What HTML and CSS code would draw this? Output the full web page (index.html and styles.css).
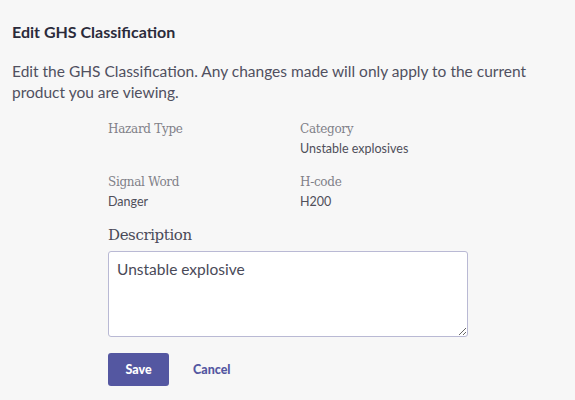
FILE: index.html
```html
<!DOCTYPE html>
<html lang="en">
<head>
    <meta charset="UTF-8">
    <title>Edit GHS Classification</title>
    <link rel="stylesheet" href="styles.css">
</head>
<body>
    <div class="panel">
        <h2 class="title">Edit GHS Classification</h2>
        <p class="intro">Edit the GHS Classification. Any changes made will only apply to the current product you are viewing.</p>

        <div class="form">
            <div class="info-grid">
                <div class="field">
                    <div class="label">Hazard Type</div>
                    <div class="value"></div>
                </div>
                <div class="field">
                    <div class="label">Category</div>
                    <div class="value">Unstable explosives</div>
                </div>
                <div class="field">
                    <div class="label">Signal Word</div>
                    <div class="value">Danger</div>
                </div>
                <div class="field">
                    <div class="label">H-code</div>
                    <div class="value">H200</div>
                </div>
            </div>

            <label class="desc-label" for="description">Description</label>
            <textarea id="description" class="desc">Unstable explosive</textarea>

            <div class="actions">
                <button class="btn-save">Save</button>
                <button class="btn-cancel">Cancel</button>
            </div>
        </div>
    </div>
</body>
</html>
```
FILE: styles.css
```css
body {
    margin: 0;
    background-color: #f7f7f7;
    font-family: Lato, "Open Sans", sans-serif;
    color: #4a4a58;
}
.panel {
    padding: 22px 12px;
}
.title {
    margin: 0 0 20px 0;
    font-size: 16px;
    font-weight: bold;
    color: #2b2b3b;
}
.intro {
    margin: 0 0 16px 0;
    font-size: 15.5px;
    line-height: 21px;
    color: #505060;
}
.form {
    margin-left: 96px;
    width: 360px;
}
.info-grid {
    display: grid;
    grid-template-columns: 192px 1fr;
    row-gap: 14px;
}
.label {
    font-family: "DejaVu Serif", serif;
    font-size: 12px;
    color: #808088;
    line-height: 20px;
    letter-spacing: -0.3px;
}
.value {
    font-size: 12.5px;
    color: #4f4f5a;
    line-height: 19px;
}
.desc-label {
    display: block;
    margin-top: 15px;
    margin-bottom: 7px;
    font-family: "DejaVu Serif", serif;
    font-size: 15px;
    letter-spacing: -0.4px;
    color: #4a4a58;
}
.desc {
    display: block;
    box-sizing: border-box;
    width: 360px;
    height: 86px;
    padding: 8px;
    border: 1px solid #b9b9d4;
    border-radius: 3px;
    background-color: white;
    font-family: Lato, sans-serif;
    font-size: 15.5px;
    color: #4a4a58;
}
.actions {
    display: flex;
    align-items: center;
    margin-top: 16px;
}
.btn-save {
    width: 61px;
    height: 33px;
    border: none;
    border-radius: 3px;
    background-color: #5457a1;
    color: white;
    font-family: Lato, sans-serif;
    font-size: 12.5px;
    font-weight: 900;
}
.btn-cancel {
    margin-left: 18px;
    border: none;
    background: none;
    color: #5457a1;
    font-family: Lato, sans-serif;
    font-size: 12.5px;
    font-weight: 900;
}
```
